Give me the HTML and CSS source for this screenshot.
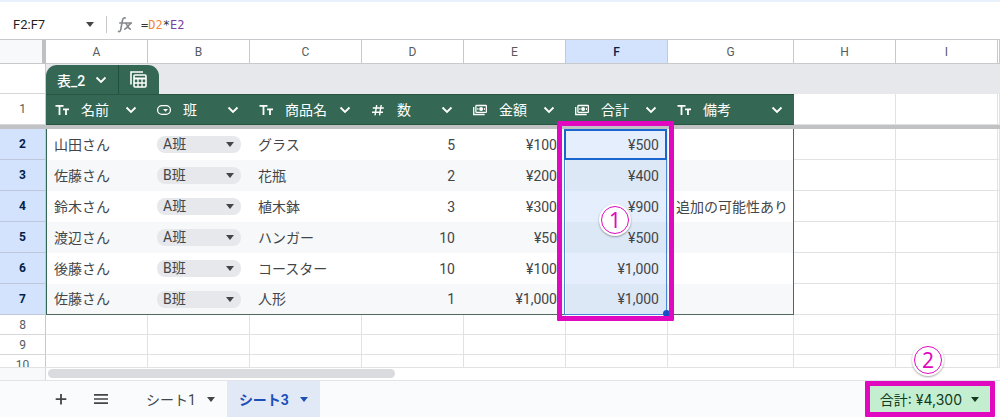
FILE: index.html
```html
<!DOCTYPE html>
<html lang="ja">
<head>
<meta charset="utf-8">
<title>表_2</title>
<link rel="stylesheet" href="styles.css">
</head>
<body>
<svg class="defs" aria-hidden="true">
  <symbol id="chev" viewBox="0 0 12 12"><path d="M1.500 3.500 6 8l4.500-4.500" fill="none" stroke="currentColor" stroke-width="1.800"/></symbol>
  <symbol id="text" viewBox="0 0 14 14"><path d="M.5 2.800h8M4.500 2.800V12M8 6.300h6M11 6.300V12" fill="none" stroke="currentColor" stroke-width="1.800"/></symbol>
  <symbol id="drop" viewBox="0 0 14 14"><rect x=".6" y="2.600" width="12.800" height="8.800" rx="4.400" fill="none" stroke="currentColor" stroke-width="1.300"/><path d="M6 6h5L8.500 8.700z" fill="currentColor"/></symbol>
  <symbol id="num" viewBox="0 0 14 14"><path d="M1.800 5h11M1 9.200h11M5.700 2 4 12.300M10.200 2 8.500 12.300" fill="none" stroke="currentColor" stroke-width="1.400"/></symbol>
  <symbol id="cash" viewBox="0 0 14 14"><path d="M.7 4v7.500h11" fill="none" stroke="currentColor" stroke-width="1.300"/><rect x="2.900" y="2.500" width="10.500" height="6.800" rx=".6" fill="none" stroke="currentColor" stroke-width="1.300"/><circle cx="8.100" cy="5.900" r="2" fill="currentColor"/><path d="M4.900 5v2M11.400 5v2" stroke="currentColor"/></symbol>
</svg>

<div class="app">
  <div class="formula-bar">
    <input class="name-box" type="text" value="F2:F7" aria-label="名前ボックス">
    <button class="plain" type="button" aria-label="範囲を選択"><span class="caret"></span></button>
    <span class="rule"></span>
    <svg class="fx" viewBox="0 0 16 18" aria-label="fx"><path d="M8.800 2.300C7.100 1.200 5.800 2.200 5.400 4.500L3.800 13.300c-.4 2.200-1.500 2.700-2.900 2M2.200 7h12.800M8.200 7.200c2.400.3 2.500 6.300 5.800 6M14.700 6.900c-2.200-.2-4.800 6.600-7.600 6.300" fill="none" stroke="currentColor" stroke-width="1.600"/></svg>
    <div class="formula">=<span class="ref-a">D2</span>*<span class="ref-b">E2</span></div>
  </div>

  <main class="grid">
    <table class="sheet">
      <colgroup><col class="c-head"><col class="c-std"><col class="c-std"><col class="c-item"><col class="c-std"><col class="c-std"><col class="c-std"><col class="c-note"><col class="c-std"><col class="c-std"><col></colgroup>
      <thead>
        <tr class="letters"><th class="corner"></th><th>A</th><th>B</th><th>C</th><th>D</th><th>E</th><th class="on">F</th><th>G</th><th>H</th><th>I</th><th></th></tr>
        <tr class="tab-row"><th class="rh blank"></th><td colspan="10">
          <div class="table-tab">
            <button type="button" class="tab-name">表_2 <svg class="i12"><use href="#chev"/></svg></button>
            <button type="button" class="tab-calc" aria-label="表のオプション"><svg viewBox="0 0 17 17"><path d="M1 13.500V1h12" fill="none" stroke="currentColor" stroke-width="1.600"/><rect x="4" y="4" width="12" height="12" rx="1" fill="none" stroke="currentColor" stroke-width="1.600"/><path d="M4 7.500h12" stroke="currentColor" stroke-width="2"/><path d="M4 12h12M8 8v8M12 8v8" stroke="currentColor" stroke-width="1.300"/></svg></button>
          </div>
        </td></tr>
        <tr class="fields">
          <th class="rh">1</th>
          <th><div class="field"><svg class="i14"><use href="#text"/></svg><span>名前</span><button type="button" aria-label="名前のメニュー"><svg class="i12"><use href="#chev"/></svg></button></div></th>
          <th><div class="field"><svg class="i14"><use href="#drop"/></svg><span>班</span><button type="button" aria-label="班のメニュー"><svg class="i12"><use href="#chev"/></svg></button></div></th>
          <th><div class="field"><svg class="i14"><use href="#text"/></svg><span>商品名</span><button type="button" aria-label="商品名のメニュー"><svg class="i12"><use href="#chev"/></svg></button></div></th>
          <th><div class="field"><svg class="i14"><use href="#num"/></svg><span>数</span><button type="button" aria-label="数のメニュー"><svg class="i12"><use href="#chev"/></svg></button></div></th>
          <th><div class="field"><svg class="i14"><use href="#cash"/></svg><span>金額</span><button type="button" aria-label="金額のメニュー"><svg class="i12"><use href="#chev"/></svg></button></div></th>
          <th><div class="field"><svg class="i14"><use href="#cash"/></svg><span>合計</span><button type="button" aria-label="合計のメニュー"><svg class="i12"><use href="#chev"/></svg></button></div></th>
          <th><div class="field"><svg class="i14"><use href="#text"/></svg><span>備考</span><button type="button" aria-label="備考のメニュー"><svg class="i12"><use href="#chev"/></svg></button></div></th>
          <td></td><td></td><td></td>
        </tr>
        <tr class="freeze"><td colspan="11"></td></tr>
      </thead>
      <tbody class="data">
        <tr><th class="rh">2</th><td class="first">山田さん</td><td><div class="chip"><select aria-label="班 2行"><option>A班</option><option>B班</option></select><span class="caret"></span></div></td><td>グラス</td><td class="n">5</td><td class="n">¥100</td><td class="n sel">¥500</td><td class="last"></td><td class="e"></td><td class="e"></td><td class="e"></td></tr>
        <tr><th class="rh">3</th><td class="first">佐藤さん</td><td><div class="chip"><select aria-label="班 3行"><option>B班</option><option>A班</option></select><span class="caret"></span></div></td><td>花瓶</td><td class="n">2</td><td class="n">¥200</td><td class="n sel">¥400</td><td class="last"></td><td class="e"></td><td class="e"></td><td class="e"></td></tr>
        <tr><th class="rh">4</th><td class="first">鈴木さん</td><td><div class="chip"><select aria-label="班 4行"><option>A班</option><option>B班</option></select><span class="caret"></span></div></td><td>植木鉢</td><td class="n">3</td><td class="n">¥300</td><td class="n sel">¥900</td><td class="last">追加の可能性あり</td><td class="e"></td><td class="e"></td><td class="e"></td></tr>
        <tr><th class="rh">5</th><td class="first">渡辺さん</td><td><div class="chip"><select aria-label="班 5行"><option>A班</option><option>B班</option></select><span class="caret"></span></div></td><td>ハンガー</td><td class="n">10</td><td class="n">¥50</td><td class="n sel">¥500</td><td class="last"></td><td class="e"></td><td class="e"></td><td class="e"></td></tr>
        <tr><th class="rh">6</th><td class="first">後藤さん</td><td><div class="chip"><select aria-label="班 6行"><option>B班</option><option>A班</option></select><span class="caret"></span></div></td><td>コースター</td><td class="n">10</td><td class="n">¥100</td><td class="n sel">¥1,000</td><td class="last"></td><td class="e"></td><td class="e"></td><td class="e"></td></tr>
        <tr><th class="rh">7</th><td class="first">佐藤さん</td><td><div class="chip"><select aria-label="班 7行"><option>B班</option><option>A班</option></select><span class="caret"></span></div></td><td>人形</td><td class="n">1</td><td class="n">¥1,000</td><td class="n sel">¥1,000</td><td class="last"></td><td class="e"></td><td class="e"></td><td class="e"></td></tr>
      </tbody>
      <tbody class="empty">
        <tr><th class="rh">8</th><td></td><td></td><td></td><td></td><td></td><td></td><td></td><td></td><td></td><td></td></tr>
        <tr><th class="rh">9</th><td></td><td></td><td></td><td></td><td></td><td></td><td></td><td></td><td></td><td></td></tr>
        <tr><th class="rh">10</th><td></td><td></td><td></td><td></td><td></td><td></td><td></td><td></td><td></td><td></td></tr>
      </tbody>
    </table>
    <div class="range"></div>
    <div class="active-cell"></div>
    <div class="handle"></div>
    <div class="callout"></div>
    <div class="mark mark-one"><span>1</span></div>
  </main>

  <div class="scroll"><div class="scroll-corner"></div><div class="track"><div class="thumb"></div></div></div>

  <footer class="footer">
    <button type="button" class="tool" aria-label="シートを追加"><svg viewBox="0 0 16 16"><path d="M8 3v10.500M2.700 8.200h10.600" stroke="currentColor" stroke-width="1.800"/></svg></button>
    <button type="button" class="tool menu" aria-label="すべてのシート"><svg viewBox="0 0 16 16"><path d="M1 3.800h14M1 8h14M1 12.200h14" stroke="currentColor" stroke-width="1.700"/></svg></button>
    <button type="button" class="sheet-tab">シート1<span class="caret"></span></button>
    <button type="button" class="sheet-tab current">シート3<span class="caret"></span></button>
    <button type="button" class="sum"><span>合計: ¥4,300</span><span class="caret"></span></button>
    <div class="mark mark-two"><span>2</span></div>
  </footer>
</div>
</body>
</html>
```

FILE: styles.css
```css
* { box-sizing: border-box; }
body {
  margin: 0;
  font-family: Roboto, "Noto Sans CJK JP", sans-serif;
  font-size: 14px;
  color: #434649;
}
button, input, select { font: inherit; color: inherit; }
button { border: 0; padding: 0; background: none; display: flex; align-items: center; }
.defs { position: absolute; width: 0; height: 0; }
.i12 { width: 12px; height: 12px; flex: none; }
.i14 { width: 14px; height: 14px; flex: none; }
.caret {
  flex: none;
  width: 0;
  height: 0;
  border: 4px solid transparent;
  border-top: 5px solid currentColor;
  border-bottom: 0;
}

.app { display: flex; flex-direction: column; height: 100vh; background: #fff; overflow: hidden; }

/* Formula bar */
.formula-bar {
  display: flex;
  align-items: center;
  flex: none;
  height: 40px;
  padding: 8px 13px 0;
  border-top: 2px solid #e8f0fb;
  border-bottom: 1px solid #c7c9cc;
}
.name-box { width: 73px; border: 0; padding: 0; font-size: 13px; color: #1f1f1f; background: none; }
.rule { width: 1px; height: 17px; margin: 0 10px 0 12px; background: #c7c9cc; }
.fx { width: 16px; height: 18px; margin-right: 8px; color: #85888c; }
.formula { font-family: "DejaVu Sans Mono", monospace; font-size: 12px; color: #333; }
.ref-a { color: #f08a3c; }
.ref-b { color: #7b3fa5; }

/* Grid */
.grid { position: relative; flex: 1; min-height: 0; overflow: hidden; }
.sheet { width: 100%; table-layout: fixed; border-collapse: separate; border-spacing: 0; }
.c-head { width: 46px; }
.c-std { width: 102px; }
.c-item { width: 112px; }
.c-note { width: 126px; }
.sheet th, .sheet td { padding: 0; font-weight: 400; }
.sheet .letters th {
  height: 24px;
  border-right: 1px solid #c7c9cc;
  border-bottom: 1px solid #c7c9cc;
  font-size: 12px;
  color: #575b5f;
}
.sheet .letters .on { background: #d3e3fd; color: #041e49; font-weight: 500; }
.sheet .letters .corner { background: #f8f9fa; border-right: 4px solid #bfc0c2; }
.sheet .rh {
  border-right: 1px solid #c7c9cc;
  border-bottom: 1px solid #d5d7da;
  font-size: 12px;
  color: #575b5f;
}
.tab-row td { height: 30px; vertical-align: bottom; background: #e7e8ec; }
.table-tab { display: inline-flex; height: 29px; vertical-align: bottom; border-radius: 11px 11px 0 0; overflow: hidden; background: #356854; color: #fff; }
.tab-name { gap: 10px; padding: 0 11px; font-weight: 500; border-right: 1px solid #21503d; }
.tab-calc { padding: 0 12px 0 11px; }
.tab-calc svg { width: 17px; height: 17px; }

.fields th { height: 31px; }
.fields td, .empty td { border-right: 1px solid #e1e2e4; border-bottom: 1px solid #e1e2e4; }
.fields th:not(.rh) { background: #356854; border-top: 1px solid #285542; border-bottom: 1px solid #285542; color: #fff; }
.field { display: flex; align-items: center; padding: 0 11px 0 9px; white-space: nowrap; }
.field span { margin-left: 12px; line-height: 20px; }
.field button { margin-left: auto; }
.freeze td { height: 4px; background: #c1c2c3; }

.data tr { height: 31px; }
.sheet .data td { padding: 0 8px; white-space: nowrap; line-height: 20px; }
.sheet .data .first { border-left: 1px solid #356854; padding-left: 7px; }
.sheet .data .last { border-right: 1px solid #50685e; }
.data tr:nth-child(even) td:not(.e) { background: #f6f8f9; }
.data tr:last-child td:not(.e) { border-bottom: 1px solid #50685e; }
.data .e { border-right: 1px solid #e1e2e4; border-bottom: 1px solid #e1e2e4; }
.sheet .data .n { text-align: right; padding-right: 9px; }
.data .sel, .data tr:nth-child(odd) .sel { background: #e4eefd; }
.data tr:nth-child(even) td.sel:not(.e) { background: #dce8f6; }
.sheet .data .rh { background: #d3e3fd; color: #041e49; font-weight: 700; border-bottom-color: #bcc8da; }
.chip { display: flex; align-items: center; height: 17px; margin: 0 1px; padding: 0 7px 0 6px; border-radius: 8px; background: #e6e8eb; }
.chip select { appearance: none; flex: 1; min-width: 0; padding: 0; border: 0; background: none; line-height: 17px; }
.empty tr { height: 20px; }

/* Selection and callouts lying over the cells */
.range, .active-cell, .handle, .callout, .mark { position: absolute; pointer-events: none; }
.range { left: 564px; top: 89px; width: 103px; height: 186px; border: 1px solid #4a86d8; }
.active-cell { left: 564px; top: 89px; width: 103px; height: 31px; border: 2px solid #1a66d0; }
.handle { left: 663px; top: 270px; width: 7px; height: 7px; border-radius: 50%; background: #1551c4; }
.callout { left: 557px; top: 81px; width: 117px; height: 200px; border: 5px solid #e009c0; border-radius: 1px; }
.mark {
  width: 32px;
  height: 32px;
  padding: 2px;
  border-radius: 50%;
  background: #fff;
  box-shadow: 0 1px 2px rgba(0, 0, 0, .35);
}
.mark span {
  display: flex;
  align-items: center;
  justify-content: center;
  height: 28px;
  border: 1px solid #e009c0;
  border-radius: 50%;
  color: #e009c0;
  font-family: "Noto Sans", sans-serif;
  font-size: 21px;
}
.mark-one { left: 599px; top: 164px; }
.mark-two { right: 56px; top: -37px; }

/* Scroll bar */
.scroll { display: flex; flex: none; height: 13px; border-top: 1px solid #e1e2e4; }
.scroll-corner { width: 46px; background: #f8f9fa; border-right: 1px solid #d5d7da; }
.track { flex: 1; padding: 1px 2px; }
.thumb { width: 36.5%; height: 9px; border-radius: 5px; background: #dadbdf; }

/* Sheet tabs */
.footer { position: relative; display: flex; flex: none; height: 37px; padding-left: 53px; background: #f9fbfd; border-top: 1px solid #e1e4e8; }
.tool svg { width: 16px; height: 16px; }
.menu { margin-left: 24px; }
.sheet-tab { gap: 11px; padding: 0 12px; }
.menu + .sheet-tab { margin-left: 25px; }
.sheet-tab.current { background: #e1e9f7; color: #1c4fb8; font-weight: 700; }
.sum {
  gap: 9px;
  margin: 0 5px 0 auto;
  padding: 0 11px 0 10px;
  border: 5px solid #e009c0;
  border-radius: 1px;
  background: #c4eed0;
  color: #123a20;
  font-family: Inter, "Noto Sans CJK JP", sans-serif;
}
```
